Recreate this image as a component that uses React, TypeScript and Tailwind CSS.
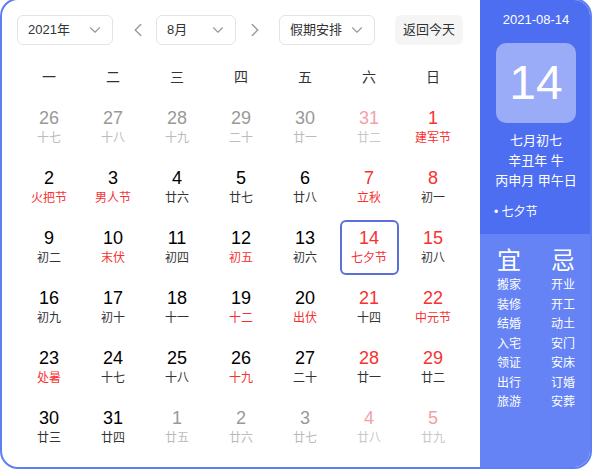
import { ChevronDown, ChevronLeft, ChevronRight } from 'lucide-react'

type Day = {
  n: number
  l: string
  kind?: 'other' | 'otherRed'
  nRed?: boolean
  lRed?: boolean
  sel?: boolean
}

const WEEK = ['一', '二', '三', '四', '五', '六', '日']

const DAYS: Day[] = [
  { n: 26, l: '十七', kind: 'other' },
  { n: 27, l: '十八', kind: 'other' },
  { n: 28, l: '十九', kind: 'other' },
  { n: 29, l: '二十', kind: 'other' },
  { n: 30, l: '廿一', kind: 'other' },
  { n: 31, l: '廿二', kind: 'otherRed' },
  { n: 1, l: '建军节', nRed: true, lRed: true },
  { n: 2, l: '火把节', lRed: true },
  { n: 3, l: '男人节', lRed: true },
  { n: 4, l: '廿六' },
  { n: 5, l: '廿七' },
  { n: 6, l: '廿八' },
  { n: 7, l: '立秋', nRed: true, lRed: true },
  { n: 8, l: '初一', nRed: true },
  { n: 9, l: '初二' },
  { n: 10, l: '末伏', lRed: true },
  { n: 11, l: '初四' },
  { n: 12, l: '初五', lRed: true },
  { n: 13, l: '初六' },
  { n: 14, l: '七夕节', nRed: true, lRed: true, sel: true },
  { n: 15, l: '初八', nRed: true },
  { n: 16, l: '初九' },
  { n: 17, l: '初十' },
  { n: 18, l: '十一' },
  { n: 19, l: '十二', lRed: true },
  { n: 20, l: '出伏', lRed: true },
  { n: 21, l: '十四', nRed: true },
  { n: 22, l: '中元节', nRed: true, lRed: true },
  { n: 23, l: '处暑', lRed: true },
  { n: 24, l: '十七' },
  { n: 25, l: '十八' },
  { n: 26, l: '十九', lRed: true },
  { n: 27, l: '二十' },
  { n: 28, l: '廿一', nRed: true },
  { n: 29, l: '廿二', nRed: true },
  { n: 30, l: '廿三' },
  { n: 31, l: '廿四' },
  { n: 1, l: '廿五', kind: 'other' },
  { n: 2, l: '廿六', kind: 'other' },
  { n: 3, l: '廿七', kind: 'other' },
  { n: 4, l: '廿八', kind: 'otherRed' },
  { n: 5, l: '廿九', kind: 'otherRed' },
]

const YI = ['搬家', '装修', '结婚', '入宅', '领证', '出行', '旅游']
const JI = ['开业', '开工', '动土', '安门', '安床', '订婚', '安葬']

function Select({ label, width }: { label: string; width: string }) {
  return (
    <div
      className={`flex items-center justify-between h-[30px] ${width} pl-[10px] pr-[8px] border border-[#e3e3e3] rounded-md text-[13px] text-[#333]`}
    >
      <span>{label}</span>
      <ChevronDown size={18} strokeWidth={1.5} className="text-[#999]" />
    </div>
  )
}

function DayCell({ d }: { d: Day }) {
  let numColor = d.nRed ? 'text-[#f73131]' : 'text-black'
  let lunarColor = d.lRed ? 'text-[#f73131]' : 'text-[#333]'
  if (d.kind === 'other') {
    numColor = 'text-[#999]'
    lunarColor = 'text-[#bbb]'
  } else if (d.kind === 'otherRed') {
    numColor = 'text-[#f3a0a8]'
    lunarColor = 'text-[#c8c8c8]'
  }
  return (
    <div className="flex items-center justify-center h-[60px]">
      <div
        className={`flex flex-col items-center justify-center w-[59px] h-[55px] rounded-md ${
          d.sel ? 'border-2 border-[#5a70d8]' : 'border-2 border-transparent'
        }`}
      >
        <span className={`text-[18px] leading-[20px] ${numColor}`}>{d.n}</span>
        <span className={`text-[12px] leading-[16px] mt-[2px] ${lunarColor}`}>{d.l}</span>
      </div>
    </div>
  )
}

export default function App() {
  return (
    <div className="w-[592px] h-[469px] overflow-hidden bg-white" style={{ fontFamily: '"Liberation Sans", "Noto Sans CJK SC", sans-serif' }}>
      <div className="flex w-[592px] h-[471px] -mt-[2px] border-2 border-[#5f7ef4] rounded-[18px] overflow-hidden">
        {/* Calendar */}
        <div className="flex-1 flex flex-col pl-[15px] pt-[15px]">
          <div className="flex items-center h-[30px]">
            <Select label="2021年" width="w-[96px]" />
            <ChevronLeft size={22} strokeWidth={1.5} className="ml-[14px] text-[#999]" />
            <div className="ml-[7px]">
              <Select label="8月" width="w-[80px]" />
            </div>
            <ChevronRight size={22} strokeWidth={1.5} className="ml-[8px] text-[#999]" />
            <div className="ml-[13px]">
              <Select label="假期安排" width="w-[96px]" />
            </div>
            <div className="ml-[20px] flex items-center justify-center h-[30px] w-[68px] rounded-md bg-[#f5f5f6] text-[13px] text-[#333]">
              返回今天
            </div>
          </div>
          <div className="grid grid-cols-7 w-[448px] mt-[17px]">
            {WEEK.map((w) => (
              <div key={w} className="h-[30px] flex items-center justify-center text-[14px] text-[#333]">
                {w}
              </div>
            ))}
          </div>
          <div className="grid grid-cols-7 w-[448px] mt-[5px]">
            {DAYS.map((d, i) => (
              <DayCell key={i} d={d} />
            ))}
          </div>
        </div>

        {/* Side panel */}
        <div className="w-[112px] flex flex-col text-white -mr-[2px]">
          <div className="bg-[#4e6ef2] h-[234px] flex flex-col items-center pt-[10px]">
            <div className="text-[13px] leading-[20px]">2021-08-14</div>
            <div className="mt-[13px] w-[80px] h-[80px] rounded-[10px] bg-[#9aabf7] flex items-center justify-center text-[48px] leading-none">
              14
            </div>
            <div className="mt-[8px] text-[13px] leading-[20px] text-center">
              <div>七月初七</div>
              <div>辛丑年 牛</div>
              <div>丙申月 甲午日</div>
            </div>
            <div className="self-start ml-[14px] mt-[11px] text-[12px] leading-[20px]">• 七夕节</div>
          </div>
          <div className="flex-1 bg-[#6583f4] flex justify-center gap-[30px] pt-[12px]">
            <div className="flex flex-col items-center">
              <div className="text-[24px] leading-[30px]">宜</div>
              {YI.map((t) => (
                <div key={t} className="text-[12px] leading-[19.5px]">
                  {t}
                </div>
              ))}
            </div>
            <div className="flex flex-col items-center">
              <div className="text-[24px] leading-[30px]">忌</div>
              {JI.map((t) => (
                <div key={t} className="text-[12px] leading-[19.5px]">
                  {t}
                </div>
              ))}
            </div>
          </div>
        </div>
      </div>
    </div>
  )
}
